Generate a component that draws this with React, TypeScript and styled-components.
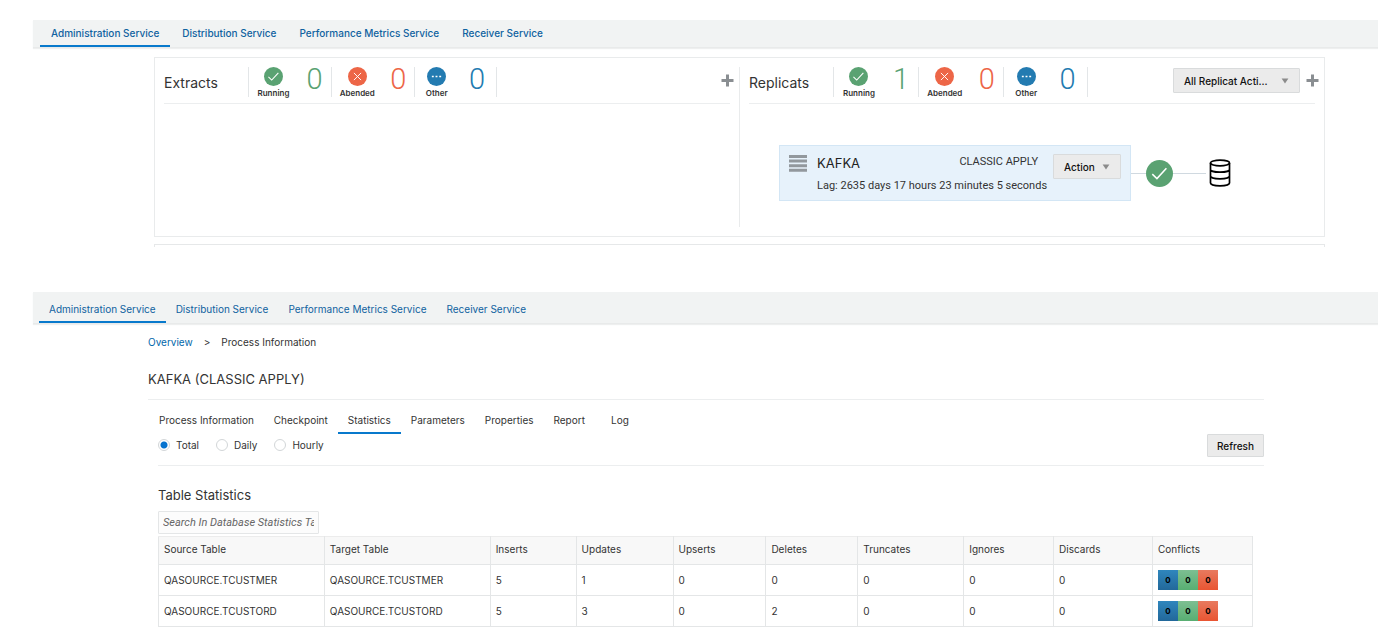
import React from "react";
import styled, { createGlobalStyle } from "styled-components";

const GlobalStyle = createGlobalStyle`
  *, *::before, *::after { box-sizing: border-box; }
  body {
    margin: 0;
    background: #fff;
    color: #333;
    font-family: Inter, "Liberation Sans", sans-serif;
    font-size: 10px;
    line-height: 16px;
  }
  button, input { font: inherit; color: inherit; }
  h1, h2, p { margin: 0; font-weight: 400; }
`;

const Page = styled.div`
  padding-top: 20px;
`;

const ServiceBar = styled.nav<{ $tall?: boolean }>`
  display: flex;
  align-items: stretch;
  gap: ${(p) => (p.$tall ? 0 : 1)}px;
  height: ${(p) => (p.$tall ? 32 : 28)}px;
  margin-left: 33px;
  padding-left: ${(p) => (p.$tall ? 6 : 7)}px;
  background: #f1f3f3;
  border-bottom: 1px solid #e8eaea;
  box-shadow: 0 1px 1px #eeefef;
`;

const ServiceLink = styled.a<{ $active?: boolean; $large?: boolean }>`
  display: flex;
  align-items: center;
  padding: ${(p) => (p.$large ? "0 11px" : "4px 10px 0")};
  border-bottom: 2px solid ${(p) => (p.$active ? "#0879cc" : "transparent")};
  color: #0f62a0;
  font-weight: ${(p) => (p.$large ? 500 : 400)};
  text-decoration: none;
  white-space: nowrap;
`;

const Overview = styled.main`
  display: flex;
  margin: 9px 53px 0 154px;
  height: 180px;
  padding: 9px 0;
  border: 1px solid #e9ebec;
`;

const Pane = styled.section`
  flex: 1;
  min-width: 0;
  padding: 0 9px;
  &:first-child { border-right: 1px solid #e9ebec; }
`;

const PaneHeader = styled.header`
  display: flex;
  height: 37px;
  border-bottom: 1px solid #eceeef;
`;

const PaneTitle = styled.h2`
  width: 84px;
  padding-top: 6px;
  font-size: 14px;
  line-height: 20px;
`;

const Stat = styled.div<{ $last?: boolean; $wide?: boolean }>`
  display: flex;
  justify-content: space-around;
  width: ${(p) => (p.$wide ? 85 : 83)}px;
  height: 30px;
  border-left: 1px solid #e3e6e8;
  border-right: ${(p) => (p.$last ? "1px solid #e3e6e8" : "0")};
`;

const StatLabel = styled.div`
  display: flex;
  flex-direction: column;
  align-items: center;
  flex-shrink: 0;
  font-size: 8px;
  line-height: 12px;
  font-weight: 600;
  gap: 1px;
`;

const StatCount = styled.span<{ $color: string }>`
  color: ${(p) => p.$color};
  font-family: Roboto, sans-serif;
  font-weight: 300;
  font-size: 29px;
  line-height: 24px;
`;

const HeaderTools = styled.div`
  display: flex;
  align-items: center;
  gap: 6px;
  margin: 0 -4px 0 auto;
  height: 27px;
`;

const IconButton = styled.button`
  display: flex;
  padding: 0;
  border: 0;
  background: none;
  cursor: pointer;
`;

const Button = styled.button<{ $width?: number }>`
  display: flex;
  align-items: center;
  justify-content: space-between;
  width: ${(p) => (p.$width ? `${p.$width}px` : "auto")};
  height: ${(p) => (p.$width ? 25 : 23)}px;
  padding: 0 ${(p) => (p.$width ? 10 : 9)}px;
  border: 1px solid #d9dbdc;
  border-radius: 1px;
  background: #ebebeb;
  color: #111;
  font-weight: 500;
  white-space: nowrap;
  cursor: pointer;
`;

const Flow = styled.div`
  display: flex;
  align-items: center;
  margin: 41px 0 0 30px;
`;

const ProcessCard = styled.article`
  display: flex;
  width: 352px;
  height: 56px;
  padding: 8px 9px;
  border: 1px solid #d3e6f5;
  background: #e7f2fb;
`;

const CardBody = styled.div`
  flex: 1;
  margin-left: 10px;
  font-family: Roboto, sans-serif;
  font-size: 11px;
  white-space: nowrap;
`;

const CardTop = styled.div`
  display: flex;
  justify-content: space-between;
  padding-right: 15px;
  height: 24px;
`;

const CardName = styled.span`
  font-family: Inter, sans-serif;
  font-size: 13px;
  line-height: 18px;
  color: #222;
`;

const Connector = styled.span<{ $width: number }>`
  width: ${(p) => p.$width}px;
  height: 1px;
  background: #d0d9e0;
`;

const NextSection = styled.div`
  height: 3px;
  margin: 7px 53px 45px 154px;
  border: 1px solid #e6e8e9;
  border-bottom: 0;
`;

const Details = styled.main`
  margin: 10px 114px 0 148px;
`;

const Breadcrumb = styled.nav`
  display: flex;
  gap: 11px;
  a { color: #0067ab; text-decoration: none; }
`;

const Title = styled.h1`
  padding: 19px 0 10px;
  border-bottom: 1px solid #eceeef;
  font-size: 13px;
  line-height: 20px;
`;

const Content = styled.div`
  margin-left: 10px;
`;

const Tabs = styled.div`
  display: flex;
  margin: 8px 0 0 -9px;
`;

const Tab = styled.button<{ $active?: boolean }>`
  min-width: 50px;
  height: 26px;
  padding: 0 10px;
  border: 0;
  border-bottom: 2px solid ${(p) => (p.$active ? "#0879cc" : "transparent")};
  background: none;
  cursor: pointer;
  white-space: nowrap;
`;

const Filters = styled.div`
  display: flex;
  align-items: flex-start;
  justify-content: space-between;
  height: 32px;
  border-bottom: 1px solid #eceeef;
`;

const RadioGroup = styled.div`
  display: flex;
  gap: 17px;
  padding-top: 3px;
`;

const RadioLabel = styled.label`
  display: flex;
  align-items: center;
  gap: 6px;
`;

const Radio = styled.input`
  appearance: none;
  width: 12px;
  height: 12px;
  margin: 0;
  border: 1px solid #d2d6d8;
  border-radius: 50%;
  background: #fff;
  &:checked { background: radial-gradient(circle, #0572ce 3px, #fff 4px); }
`;

const TableTitle = styled.h2`
  margin: 19px 0 6px;
  font-size: 13px;
  line-height: 20px;
`;

const Search = styled.input`
  display: block;
  width: 161px;
  height: 23px;
  margin-bottom: 2px;
  padding: 0 4px;
  border: 1px solid #e4e6e7;
  border-radius: 1px;
  background: #fcfcfc;
  font-family: Roboto, sans-serif;
  font-size: 11px;
  &::placeholder { color: #666; font-style: italic; opacity: 1; }
`;

const TableWrap = styled.div`
  margin-right: 11px;
`;

const Table = styled.table`
  width: 100%;
  table-layout: fixed;
  border-collapse: collapse;
  th, td {
    height: 31px;
    padding: 0 5px;
    border: 1px solid #e4e6e7;
    text-align: left;
    font-weight: 400;
  }
  th { height: 28px; padding-bottom: 3px; background: #f8f8f8; border-top-color: #ececec; }
`;

const Conflicts = styled.div`
  display: flex;
`;

const Conflict = styled.span<{ $from: string; $to: string }>`
  width: 20px;
  height: 20px;
  background: linear-gradient(${(p) => p.$from}, ${(p) => p.$to});
  color: #000;
  font-size: 8px;
  line-height: 20px;
  font-weight: 700;
  text-align: center;
`;

const services = ["Administration Service", "Distribution Service", "Performance Metrics Service", "Receiver Service"];

function Services({ large }: { large?: boolean }) {
  return (
    <ServiceBar $tall={!large} aria-label="Services">
      {services.map((name, i) => (
        <ServiceLink key={name} href="#" $active={i === 0} $large={large}>{name}</ServiceLink>
      ))}
    </ServiceBar>
  );
}

type Kind = "Running" | "Abended" | "Other";
const colors: Record<Kind, string> = { Running: "#5aa272", Abended: "#ed6647", Other: "#237bb1" };

function StatusIcon({ kind, size = 19 }: { kind: Kind; size?: number }) {
  return (
    <svg width={size} height={size} viewBox="0 0 18 18" fill="none" stroke="#fff" aria-hidden="true" style={{ flexShrink: 0 }}>
      <circle cx="9" cy="9" r="9" fill={colors[kind]} stroke="none" />
      {kind === "Running" && <path d="M4.2 9.4 7.3 12.4 13.6 5.5" strokeWidth="1" />}
      {kind === "Abended" && <path d="M5.6 5.6 12.4 12.4M12.4 5.6 5.6 12.4" strokeWidth="0.9" />}
      {kind === "Other" && <path d="M4.6 9h1.8M8.1 9h1.8M11.6 9h1.8" strokeWidth="1.6" />}
    </svg>
  );
}

function Stats({ counts, wide }: { counts: number[]; wide?: boolean }) {
  return (
    <>
      {(["Running", "Abended", "Other"] as Kind[]).map((kind, i) => (
        <Stat key={kind} $last={i === 2} $wide={wide}>
          <StatLabel><StatusIcon kind={kind} />{kind}</StatLabel>
          <StatCount $color={colors[kind]}>{counts[i]}</StatCount>
        </Stat>
      ))}
    </>
  );
}

function Plus({ label }: { label: string }) {
  return (
    <IconButton aria-label={label}>
      <svg width="13" height="13" viewBox="0 0 13 13" aria-hidden="true">
        <path d="M6.5.5v12M.5 6.5h12" stroke="#8a8e92" strokeWidth="3" />
      </svg>
    </IconButton>
  );
}

const Caret = () => (
  <svg width="8" height="6" viewBox="0 0 8 6" aria-hidden="true">
    <path d="M.6.4h6.8L4 5.6Z" fill="#8b8b8b" />
  </svg>
);

const columns: [string, number][] = [
  ["Source Table", 166], ["Target Table", 166], ["Inserts", 86], ["Updates", 97], ["Upserts", 93],
  ["Deletes", 92], ["Truncates", 106], ["Ignores", 90], ["Discards", 99], ["Conflicts", 100],
];
const totalWidth = columns.reduce((sum, c) => sum + c[1], 0);

const rows = [
  ["QASOURCE.TCUSTMER", "QASOURCE.TCUSTMER", 5, 1, 0, 0, 0, 0, 0],
  ["QASOURCE.TCUSTORD", "QASOURCE.TCUSTORD", 5, 3, 0, 2, 0, 0, 0],
];

const tabs = ["Process Information", "Checkpoint", "Statistics", "Parameters", "Properties", "Report", "Log"];

export default function App() {
  return (
    <Page>
      <GlobalStyle />
      <Services large />
      <Overview>
        <Pane>
          <PaneHeader>
            <PaneTitle>Extracts</PaneTitle>
            <Stats counts={[0, 0, 0]} />
            <HeaderTools><Plus label="Add extract" /></HeaderTools>
          </PaneHeader>
        </Pane>
        <Pane>
          <PaneHeader>
            <PaneTitle>Replicats</PaneTitle>
            <Stats counts={[1, 0, 0]} wide />
            <HeaderTools>
              <Button $width={127} aria-haspopup="menu">All Replicat Acti... <Caret /></Button>
              <Plus label="Add replicat" />
            </HeaderTools>
          </PaneHeader>
          <Flow>
            <ProcessCard>
              <svg width="18" height="18" viewBox="0 0 18 18" aria-hidden="true">
                <path d="M0 2.5h18M0 7.1h18M0 11.7h18M0 16.3h18" stroke="#92989d" strokeWidth="3" />
              </svg>
              <CardBody>
                <CardTop><CardName>KAFKA</CardName><span>CLASSIC APPLY</span></CardTop>
                <p>Lag: 2635 days 17 hours 23 minutes 5 seconds</p>
              </CardBody>
              <Button $width={68} aria-haspopup="menu">Action <Caret /></Button>
            </ProcessCard>
            <Connector $width={15} />
            <StatusIcon kind="Running" size={27} />
            <Connector $width={33} />
            <svg width="28" height="28" viewBox="0 0 28 28" fill="none" stroke="#000" strokeWidth="1.7" aria-hidden="true">
              <ellipse cx="14" cy="4" rx="9.5" ry="2.8" />
              <path d="M4.5 4v20c0 1.6 4 2.8 9.5 2.8s9.5-1.2 9.5-2.8V4M4.5 10.4c0 1.6 4 2.8 9.5 2.8s9.5-1.2 9.5-2.8M4.5 17c0 1.6 4 2.8 9.5 2.8s9.5-1.2 9.5-2.8" />
            </svg>
          </Flow>
        </Pane>
      </Overview>
      <NextSection />
      <Services />
      <Details>
        <Breadcrumb aria-label="Breadcrumb"><a href="#">Overview</a><span>&gt;</span><span>Process Information</span></Breadcrumb>
        <Title>KAFKA (CLASSIC APPLY)</Title>
        <Content>
          <Tabs role="tablist">
            {tabs.map((t) => <Tab key={t} role="tab" aria-selected={t === "Statistics"} $active={t === "Statistics"}>{t}</Tab>)}
          </Tabs>
          <Filters>
            <RadioGroup>
              {["Total", "Daily", "Hourly"].map((r) => (
                <RadioLabel key={r}><Radio type="radio" name="period" defaultChecked={r === "Total"} />{r}</RadioLabel>
              ))}
            </RadioGroup>
            <Button>Refresh</Button>
          </Filters>
          <TableTitle>Table Statistics</TableTitle>
          <Search placeholder="Search In Database Statistics Table" aria-label="Search in database statistics table" />
          <TableWrap>
            <Table>
              <colgroup>
                {columns.map(([name, w]) => <col key={name} style={{ width: `${(w / totalWidth) * 100}%` }} />)}
              </colgroup>
              <thead><tr>{columns.map(([name]) => <th key={name} scope="col">{name}</th>)}</tr></thead>
              <tbody>
                {rows.map((row) => (
                  <tr key={row[0]}>
                    {row.map((cell, i) => <td key={i}>{cell}</td>)}
                    <td>
                      <Conflicts>
                        <Conflict $from="#2f86bd" $to="#22689a">0</Conflict>
                        <Conflict $from="#7dbf92" $to="#58ae72">0</Conflict>
                        <Conflict $from="#e87a5f" $to="#e95532">0</Conflict>
                      </Conflicts>
                    </td>
                  </tr>
                ))}
              </tbody>
            </Table>
          </TableWrap>
        </Content>
      </Details>
    </Page>
  );
}
